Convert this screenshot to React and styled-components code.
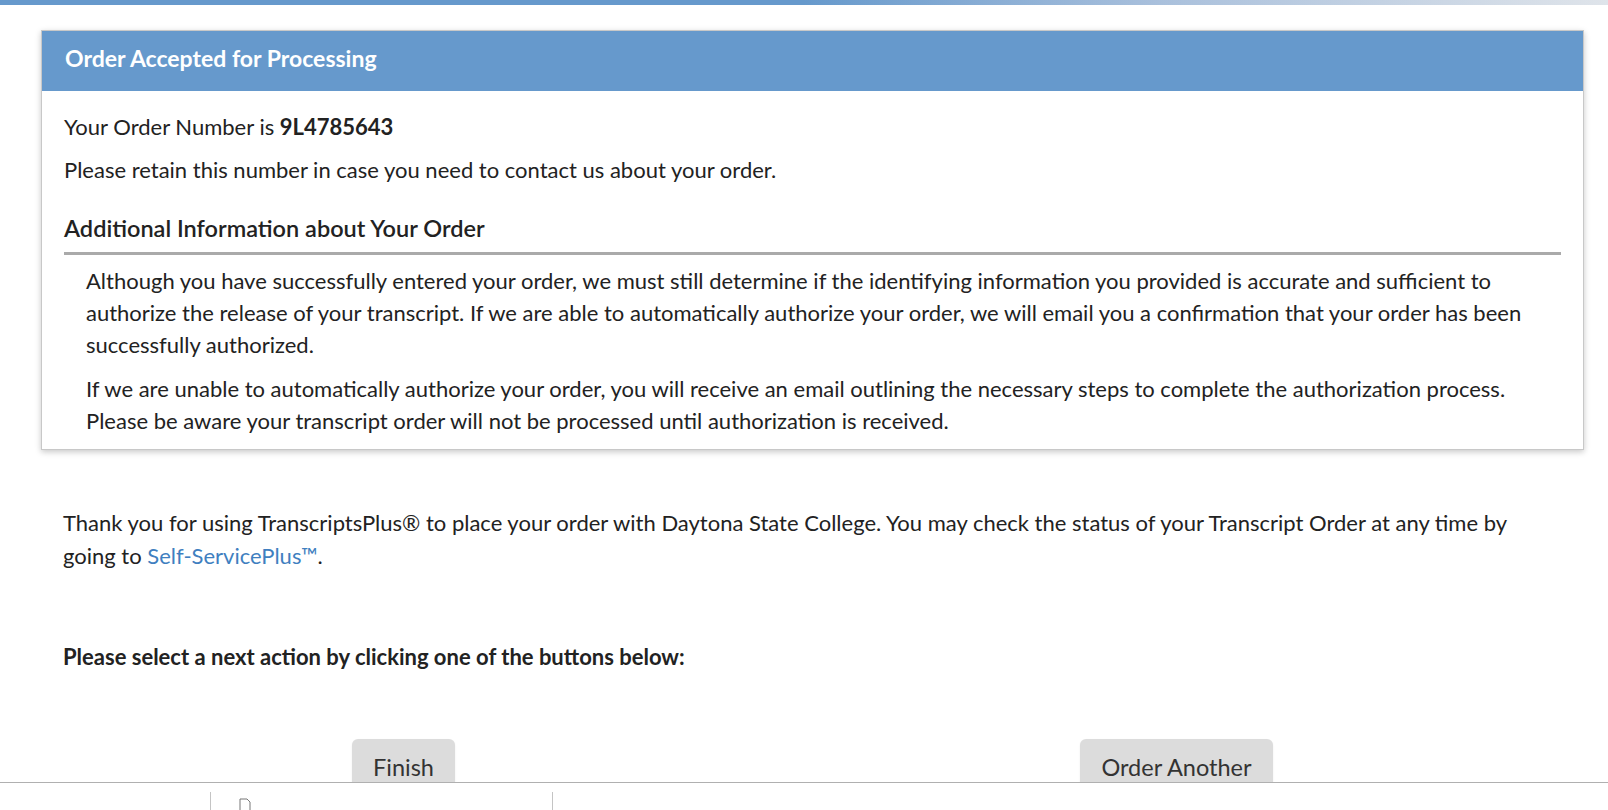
import React from 'react';
import styled, { createGlobalStyle } from 'styled-components';

const GlobalStyle = createGlobalStyle`
	html, body {
		margin: 0;
		padding: 0;
		background: #ffffff;
		overflow: hidden;
	}
	body {
		font-family: Lato, "Open Sans", sans-serif;
		color: #222222;
	}
`;

const TopStrip = styled.div`
	height: 5px;
	background: linear-gradient(to right, #6699cc 0%, #6699cc 50%, #a9c0dc 72%, #dfe4ea 100%);
`;

const Page = styled.div`
	padding: 25px 24px 0 41px;
`;

const Panel = styled.section`
	border: 1px solid #c8c8c8;
	box-shadow: 0 2px 6px rgba(0, 0, 0, 0.22);
	background: #ffffff;
`;

const PanelHeader = styled.div`
	display: flex;
	align-items: center;
	height: 60px;
	box-sizing: border-box;
	padding: 0 23px 6px 23px;
	background: #6699cc;
	color: #ffffff;
	font-size: 23px;
	font-weight: 700;
`;

const PanelBody = styled.div`
	padding: 20px 22px 12px 22px;
`;

const Line = styled.p`
	margin: 0 0 11px 0;
	font-size: 22px;
	line-height: 32px;
`;

const SubHeading = styled.h3`
	margin: 26px 0 0 0;
	padding-bottom: 8px;
	border-bottom: 3px solid #aaaaaa;
	font-size: 23.5px;
	font-weight: 600;
	line-height: 32px;
`;

const Indented = styled.div`
	padding: 10px 0 0 22px;

	p {
		margin: 0 0 12px 0;
		font-size: 22px;
		line-height: 32px;
	}
	p:last-child {
		margin-bottom: 0;
	}
`;

const ThankYou = styled.p`
	margin: 56px 30px 0 22px;
	font-size: 22px;
	line-height: 33px;
`;

const Link = styled.a`
	color: #3f7fc0;
	text-decoration: none;
	white-space: nowrap;
`;

const Prompt = styled.p`
	margin: 69px 0 0 22px;
	font-size: 22px;
	font-weight: 700;
	line-height: 32px;
`;

const ButtonRow = styled.div`
	display: grid;
	grid-template-columns: 1fr 1fr;
	margin: 66px 21px 0 -24px;
	justify-items: center;
`;

const ActionButton = styled.button`
	padding: 13px 21px 14px 21px;
	background: #dcdcdc;
	border: none;
	border-radius: 6px;
	box-shadow: 0 1px 2px rgba(0, 0, 0, 0.08);
	color: #333333;
	font-family: Lato, "Open Sans", sans-serif;
	font-size: 23.5px;
	line-height: 30px;
	cursor: pointer;
`;

const StatusBar = styled.div`
	position: fixed;
	left: 0;
	right: 0;
	bottom: 0;
	height: 27px;
	display: flex;
	background: #ffffff;
	border-top: 1px solid #b0b0b0;
`;

const StatusCell = styled.div`
	position: relative;
	width: ${p => p.w}px;
	margin-top: 9px;
	border-right: ${p => (p.divider ? '1px solid #c4c4c4' : 'none')};
`;

const DocIcon = styled.svg`
	position: absolute;
	left: 28px;
	top: 6px;
`;

export default function App() {
	return (
		<>
			<GlobalStyle />
			<TopStrip />
			<Page>
				<Panel>
					<PanelHeader>Order Accepted for Processing</PanelHeader>
					<PanelBody>
						<Line>Your Order Number is <strong>9L4785643</strong></Line>
						<Line>Please retain this number in case you need to contact us about your order.</Line>
						<SubHeading>Additional Information about Your Order</SubHeading>
						<Indented>
							<p>
								Although you have successfully entered your order, we must still determine if the identifying information you provided is accurate and sufficient to authorize the release of your transcript. If we are able to automatically authorize your order, we will email you a confirmation that your order has been successfully authorized.
							</p>
							<p>
								If we are unable to automatically authorize your order, you will receive an email outlining the necessary steps to complete the authorization process. Please be aware your transcript order will not be processed until authorization is received.
							</p>
						</Indented>
					</PanelBody>
				</Panel>

				<ThankYou>
					Thank you for using TranscriptsPlus® to place your order with Daytona State College. You may check the status of your Transcript Order at any time by going to <Link href="#">Self-ServicePlus™</Link>.
				</ThankYou>

				<Prompt>Please select a next action by clicking one of the buttons below:</Prompt>

				<ButtonRow>
					<ActionButton>Finish</ActionButton>
					<ActionButton>Order Another</ActionButton>
				</ButtonRow>
			</Page>

			<StatusBar>
				<StatusCell w={210} divider />
				<StatusCell w={341} divider>
					<DocIcon width="12" height="14" viewBox="0 0 12 14">
						<path d="M1 1h7l3 3v9H1z" fill="#fff" stroke="#777" strokeWidth="1" />
					</DocIcon>
				</StatusCell>
			</StatusBar>
		</>
	);
}
